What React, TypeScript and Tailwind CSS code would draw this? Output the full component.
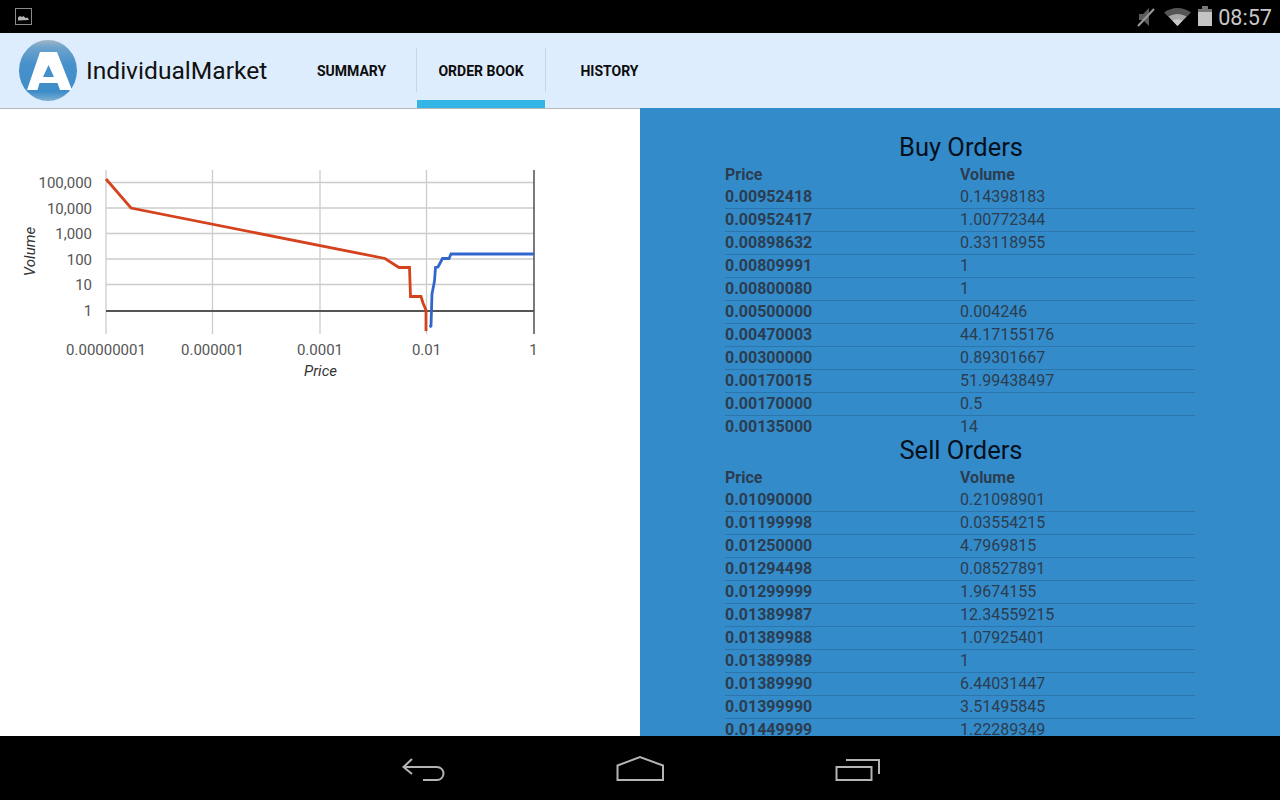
const buyOrders = [
  ["0.00952418", "0.14398183"],
  ["0.00952417", "1.00772344"],
  ["0.00898632", "0.33118955"],
  ["0.00809991", "1"],
  ["0.00800080", "1"],
  ["0.00500000", "0.004246"],
  ["0.00470003", "44.17155176"],
  ["0.00300000", "0.89301667"],
  ["0.00170015", "51.99438497"],
  ["0.00170000", "0.5"],
  ["0.00135000", "14"],
];

const sellOrders = [
  ["0.01090000", "0.21098901"],
  ["0.01199998", "0.03554215"],
  ["0.01250000", "4.7969815"],
  ["0.01294498", "0.08527891"],
  ["0.01299999", "1.9674155"],
  ["0.01389987", "12.34559215"],
  ["0.01389988", "1.07925401"],
  ["0.01389989", "1"],
  ["0.01389990", "6.44031447"],
  ["0.01399990", "3.51495845"],
  ["0.01449999", "1.22289349"],
];

const yTicks: [string, number][] = [
  ["100,000", 182.5],
  ["10,000", 208],
  ["1,000", 233.5],
  ["100", 259],
  ["10", 284.5],
];

const xTicks: [string, number][] = [
  ["0.00000001", 106],
  ["0.000001", 212.5],
  ["0.0001", 320],
  ["0.01", 426.5],
  ["1", 534],
];

function Logo() {
  return (
    <svg width="62" height="62" viewBox="0 0 62 62" className="shrink-0">
      <defs>
        <linearGradient id="ball" x1="0" y1="0" x2="0" y2="1">
          <stop offset="0" stopColor="#a3b5c3" />
          <stop offset="0.12" stopColor="#6ea3cb" />
          <stop offset="0.4" stopColor="#4791cb" />
          <stop offset="0.85" stopColor="#3f8dc8" />
          <stop offset="1" stopColor="#7fb0d4" />
        </linearGradient>
      </defs>
      <ellipse cx="31" cy="30.500" rx="29" ry="30.500" fill="url(#ball)" />
      <path
        d="M23 12H40L55 50H43L40.500 43H22.500L20.500 50H10Z M31.500 25L26 37H37Z"
        fill="#fff"
        fillRule="evenodd"
      />
    </svg>
  );
}

function MutedIcon() {
  return (
    <svg width="20" height="20" viewBox="0 0 20 20">
      <path d="M3 7h4l6-6v18l-6-6H3z" fill="#5c5c5c" />
      <path d="M18 2 2 19" stroke="#9a9a9a" strokeWidth="2" />
    </svg>
  );
}

function WifiIcon() {
  return (
    <svg width="27" height="18" viewBox="0 0 27 18">
      <path d="M13.500 18 0 4.500C8-1.500 19-1.500 27 4.500z" fill="#555" />
      <path d="M13.500 18 4.500 8.500c5.500-3.500 12.500-3.500 18 0z" fill="#a8a8a8" />
      <path d="M13.500 18 8.500 12.500c3-1.800 7-1.800 10 0z" fill="#c8c8c8" />
    </svg>
  );
}

function BatteryIcon() {
  return (
    <svg width="14" height="20" viewBox="0 0 14 20">
      <rect x="4" y="0" width="6" height="3" fill="#777" />
      <rect x="0" y="3" width="14" height="3" fill="#777" />
      <rect x="0" y="6" width="14" height="14" fill="#c4c4c4" />
    </svg>
  );
}

function StatusBar() {
  return (
    <div className="h-[33px] bg-black flex items-center justify-between pl-[15px] pr-[8px] shrink-0">
      <svg width="17" height="17" viewBox="0 0 17 17">
        <rect x="0.500" y="0.500" width="16" height="16" fill="none" stroke="#8a8a8a" />
        <path d="M3 12.500V9.500l2-1.500 2 1 1.500-1 2 2 2-.5 1.500 2.500z" fill="#b5b5b5" />
      </svg>
      <div className="flex items-center">
        <MutedIcon />
        <div className="ml-[8px]">
          <WifiIcon />
        </div>
        <div className="ml-[7px] -mt-[1px]">
          <BatteryIcon />
        </div>
        <span className="ml-[6px] mt-[2px] text-[21.600px] leading-none text-[#c8c8c8]">08:57</span>
      </div>
    </div>
  );
}

function Tab({ label, active, width }: { label: string; active?: boolean; width: string }) {
  return (
    <div className={`relative h-full flex items-center justify-center ${width}`}>
      <span className="mt-[1px] text-[14px] font-bold text-[#0c0c0c]">{label}</span>
      {active && <div className="absolute bottom-0 left-0 right-0 h-2 bg-[#33b5e5]" />}
    </div>
  );
}

function ActionBar() {
  return (
    <div className="h-[75px] bg-[#deedfe] flex items-stretch pl-[17px] shrink-0">
      <div className="flex items-center w-[270px] shrink-0">
        <Logo />
        <span className="ml-[7px] mt-[2px] text-[24.600px] text-[#111]">IndividualMarket</span>
      </div>
      <Tab label="SUMMARY" width="w-[129px]" />
      <div className="w-px h-[44px] mt-[15px] bg-[#c8d6e4]" />
      <Tab label="ORDER BOOK" active width="w-[128px]" />
      <div className="w-px h-[44px] mt-[15px] bg-[#c8d6e4]" />
      <Tab label="HISTORY" width="w-[127px]" />
    </div>
  );
}

function DepthChart() {
  return (
    <svg width="640" height="300" viewBox="0 109 640 300" className="block">
      {yTicks.map(([label, y]) => (
        <g key={label}>
          <line x1="106" x2="534" y1={y} y2={y} stroke="#cccccc" strokeWidth="1.500" />
          <text x="92" y={y + 5.500} textAnchor="end" fontSize="15" fill="#555">
            {label}
          </text>
        </g>
      ))}
      {xTicks.map(([label, x]) => (
        <g key={label}>
          <line
            x1={x}
            x2={x}
            y1="170"
            y2="334"
            stroke={label === "1" ? "#333" : "#cccccc"}
            strokeWidth="1.300"
          />
          <text x={label === "1" ? 533.5 : x} y="355" textAnchor="middle" fontSize="15" fill="#555">
            {label}
          </text>
        </g>
      ))}
      <line x1="106" x2="534" y1="311" y2="311" stroke="#555" strokeWidth="1.800" />
      <text x="88" y="316" textAnchor="middle" fontSize="15" fill="#555">
        1
      </text>
      <text
        x="0"
        y="0"
        transform="translate(35 251.500) rotate(-90)"
        textAnchor="middle"
        fontSize="15"
        fontStyle="italic"
        fill="#333"
      >
        Volume
      </text>
      <text x="320.500" y="376" textAnchor="middle" fontSize="15" fontStyle="italic" fill="#333">
        Price
      </text>
      <polyline
        points="106,179 131,208 385,258.500 399,267.500 409.500,267.500 410.500,296.500 421,296.500 423,303 426,310 426,331"
        fill="none"
        stroke="#d4421e"
        strokeWidth="2.800"
      />
      <polyline
        points="429.500,327 431,326 432,294 434.500,281 435.500,267.500 438,267 442.500,258.500 449,258.500 451,254 534,254"
        fill="none"
        stroke="#3366cc"
        strokeWidth="2.800"
      />
    </svg>
  );
}

function OrderTable({ title, rows, className }: { title: string; rows: string[][]; className?: string }) {
  return (
    <div className={className}>
      <div className="h-[31px] pl-[2px] flex items-center justify-center text-[25.500px] text-[#06101c]">{title}</div>
      <div className="h-[23px] flex items-center text-[16px] font-bold text-[#2b3d50]">
        <div className="w-[235px]">Price</div>
        <div>Volume</div>
      </div>
      {rows.map((row, i) => (
        <div
          key={row[0]}
          className={`h-[23px] flex items-center text-[16px] text-[#2b3d50] border-b ${
            i < rows.length - 1 ? "border-[#2c76ad]" : "border-transparent"
          }`}
        >
          <div className="w-[235px] font-bold">{row[0]}</div>
          <div>{row[1]}</div>
        </div>
      ))}
    </div>
  );
}

function NavBar() {
  return (
    <div className="h-[64px] bg-black flex items-center justify-center shrink-0">
      <svg width="520" height="64" viewBox="380 736 520 64" fill="none" stroke="#b4b4b4" strokeWidth="2">
        <path d="M412 759l-8.500 8 8.500 7" />
        <path d="M403.500 767H437a6.500 6.500 0 0 1 0 13H423" />
        <path d="M617.500 780V765.500L640 757l23 8.500V780z" />
        <path d="M836.500 767h35v13h-35z" />
        <path d="M846 760h33v14" />
      </svg>
    </div>
  );
}

export default function App() {
  return (
    <div
      className="w-[1280px] h-[800px] flex flex-col overflow-hidden bg-white"
      style={{ fontFamily: "Roboto, sans-serif" }}
    >
      <StatusBar />
      <ActionBar />
      <div className="flex flex-1 min-h-0">
        <div className="w-[640px] bg-white border-t border-[#b5b9bd]">
          <DepthChart />
        </div>
        <div className="w-[640px] bg-[#348bca] overflow-hidden px-[85px] pt-[24px]">
          <OrderTable title="Buy Orders" rows={buyOrders} />
          <OrderTable title="Sell Orders" rows={sellOrders} className="-mt-[4px]" />
        </div>
      </div>
      <NavBar />
    </div>
  );
}
